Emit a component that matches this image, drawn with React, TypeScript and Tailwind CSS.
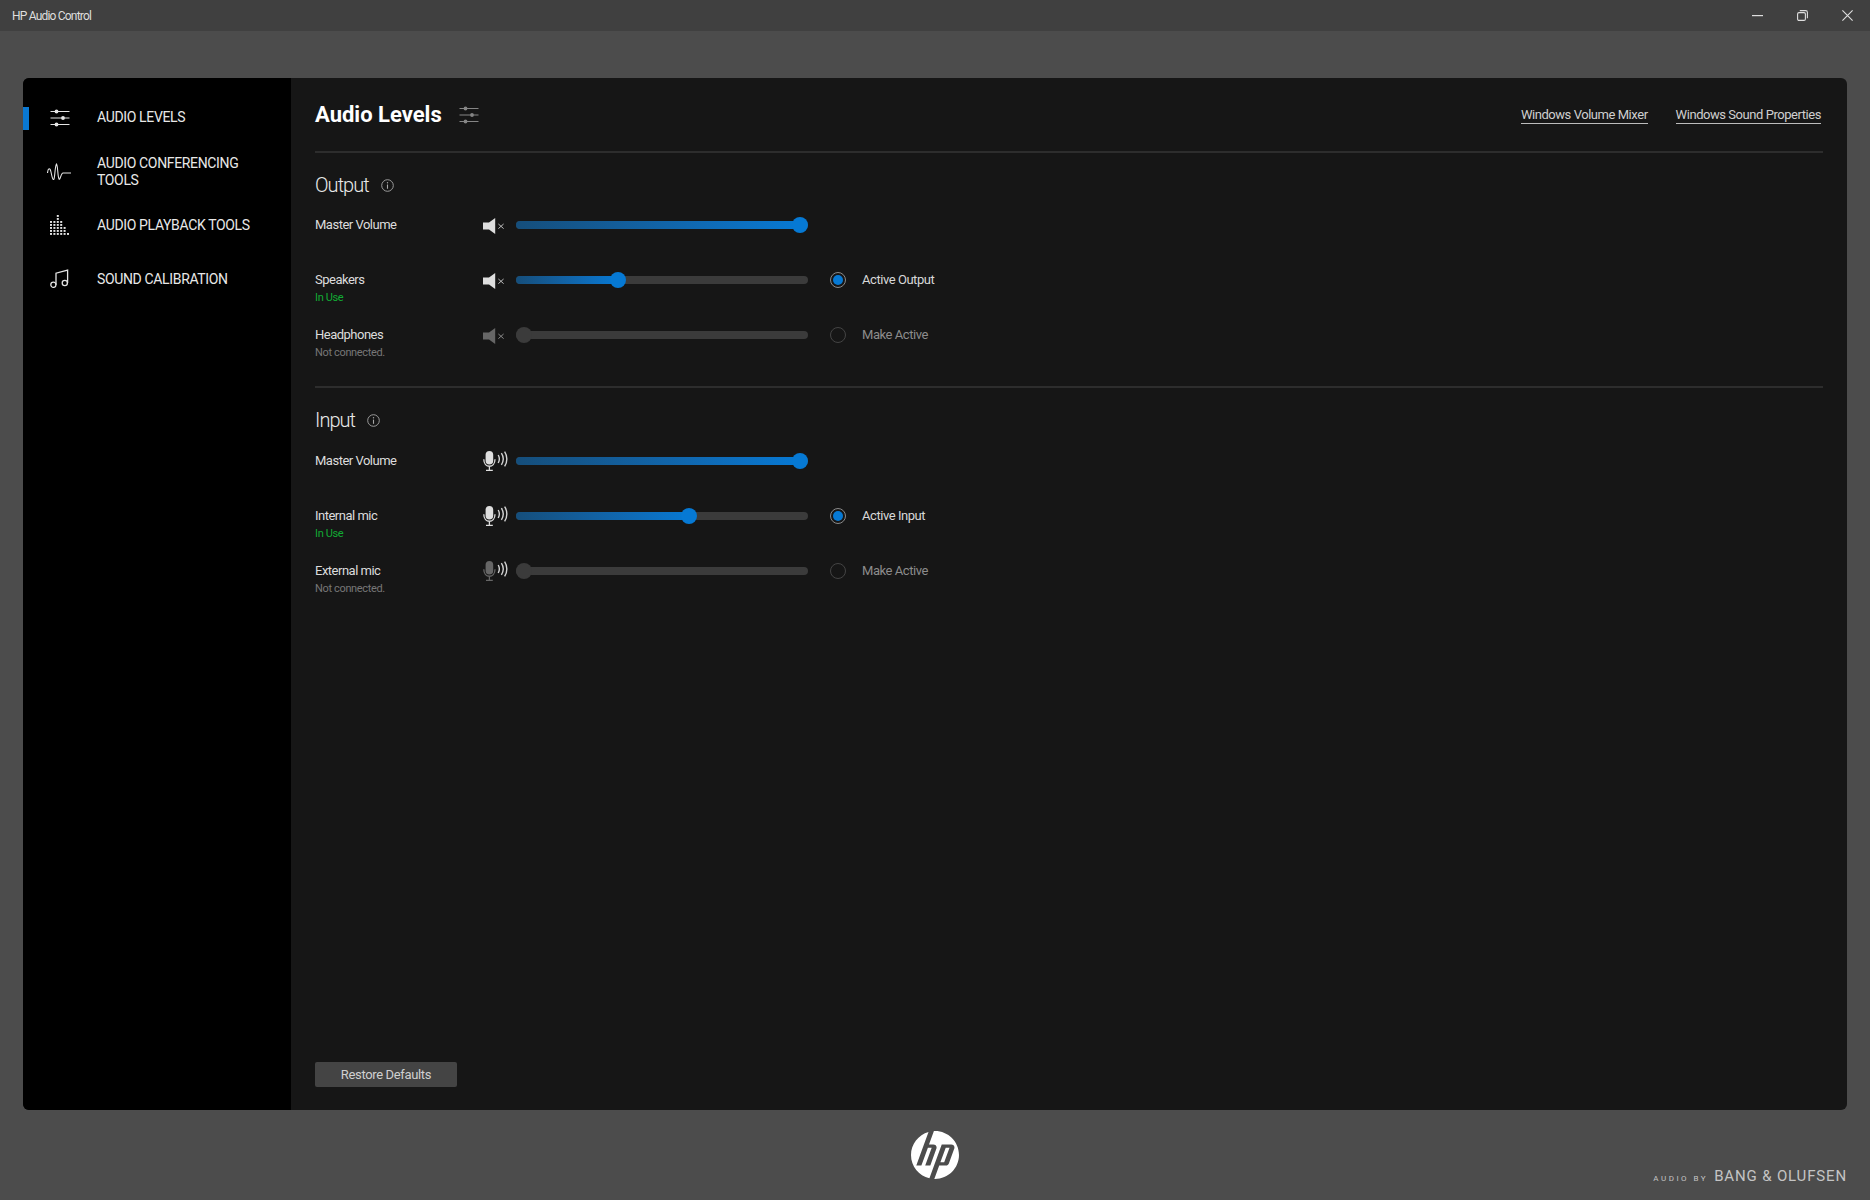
import { ReactNode } from 'react';
import { SiHp } from 'react-icons/si';

function SlidersIcon({ className }: { className?: string }) {
  return (
    <svg viewBox="0 0 20 18" className={className} fill="none" stroke="currentColor" strokeWidth="1.2">
      <path d="M0.5 2.5H19.5M0.5 9H19.5M0.5 15.5H19.5" />
      <circle cx="6.5" cy="2.5" r="1.9" fill="currentColor" stroke="none" />
      <circle cx="13" cy="9" r="1.9" fill="currentColor" stroke="none" />
      <circle cx="6.5" cy="15.5" r="1.9" fill="currentColor" stroke="none" />
    </svg>
  );
}

function WaveIcon({ className }: { className?: string }) {
  return (
    <svg viewBox="0 0 24 18" className={className} fill="none" stroke="currentColor" strokeWidth="1.1">
      <path d="M0.5 10C1 5 3 4 4 9C5 14 6 18 7 16C8 13 8 3 9.5 1C11 3 10.5 13 12 16C13 18 14 10 16 10L24 10" />
    </svg>
  );
}

const BAR_COLUMNS = [5, 5, 7, 5, 3, 1];

function BarsIcon({ className }: { className?: string }) {
  return (
    <svg viewBox="0 0 19 20" className={className} fill="currentColor">
      {BAR_COLUMNS.map((rows, col) =>
        Array.from({ length: rows }).map((_, row) => (
          <rect key={`${col}-${row}`} x={col * 3.4} y={18 - row * 3} width="2" height="1.9" />
        )),
      )}
    </svg>
  );
}

function MusicIcon({ className }: { className?: string }) {
  return (
    <svg viewBox="0 0 19 19" className={className} fill="none" stroke="currentColor" strokeWidth="1.3">
      <circle cx="3.4" cy="15.8" r="2.6" />
      <circle cx="14.8" cy="14" r="2.6" />
      <path d="M6 15.8V4.2L17.6 1.2V14" />
    </svg>
  );
}

function InfoIcon() {
  return (
    <svg viewBox="0 0 13 13" className="h-[13px] w-[13px] text-[#a8a8a8]" fill="none" stroke="currentColor">
      <circle cx="6.5" cy="6.5" r="5.8" strokeWidth="0.9" />
      <path d="M6.5 5.6V9.8" strokeWidth="1.1" />
      <circle cx="6.5" cy="3.8" r="0.7" fill="currentColor" stroke="none" />
    </svg>
  );
}

function SpeakerIcon({ muted }: { muted?: boolean }) {
  return (
    <svg viewBox="0 0 22 16" className={`mt-[2px] h-[16px] w-[22px] ${muted ? 'text-[#666666]' : 'text-[#dedede]'}`}>
      <path d="M0 4.6H6L12.2 0V16L6 11.4H0Z" fill="currentColor" />
      <path d="M15.4 6L20.6 10.6M20.6 6L15.4 10.6" stroke={muted ? '#8a8a8a' : '#bdbdbd'} strokeWidth="1" fill="none" />
    </svg>
  );
}

function MicIcon({ muted }: { muted?: boolean }) {
  return (
    <svg viewBox="0 0 27 20" className={`h-[20px] w-[27px] ${muted ? 'text-[#666666]' : 'text-[#dedede]'}`} fill="none">
      <rect x="2.6" y="0" width="7.6" height="13.6" rx="3.8" fill="currentColor" />
      <path d="M0.8 8.2C0.8 17.6 12 17.6 12 8.2M6.4 15.6V19.2M3 19.4H9.8" stroke="currentColor" strokeWidth="1.3" />
      <path
        d="M15.2 4C16.6 6.4 16.6 9.6 15.2 12M18.4 2.2C20.6 5.6 20.6 10.4 18.4 13.8M21.6 0.6C24.6 5 24.6 11 21.6 15.4"
        stroke="#d4d4d4"
        strokeWidth="1.4"
      />
    </svg>
  );
}

const NAV = [
  { label: 'AUDIO LEVELS', icon: SlidersIcon, size: 'ml-[3px] h-[18px] w-[20px]', active: true },
  { label: 'AUDIO CONFERENCING TOOLS', icon: WaveIcon, size: 'h-[18px] w-[24px]' },
  { label: 'AUDIO PLAYBACK TOOLS', icon: BarsIcon, size: '-mt-[3px] ml-[3px] h-[20px] w-[19px]' },
  { label: 'SOUND CALIBRATION', icon: MusicIcon, size: '-mt-[4px] ml-[3px] h-[19px] w-[19px]' },
];

function Sidebar() {
  return (
    <aside className="w-[268px] shrink-0 bg-black pt-[13px]">
      {NAV.map((item) => (
        <div key={item.label} className="flex h-[54px] items-center">
          <div className={`h-[23px] w-[6px] shrink-0 ${item.active ? 'bg-[#0a78d2]' : ''}`} />
          <div className="ml-[18px] w-[24px] shrink-0 text-[#e4e4e4]">
            <item.icon className={item.size} />
          </div>
          <span className="ml-[26px] w-[170px] text-[14px] leading-[17.5px] tracking-[-0.35px] text-[#e8e8e8]">
            {item.label}
          </span>
        </div>
      ))}
    </aside>
  );
}

function Slider({ value, disabled }: { value: number; disabled?: boolean }) {
  return (
    <div className="relative h-[8px] w-[292px] rounded-full bg-[#3b3b3b]">
      {!disabled && (
        <div
          className="h-full rounded-l-full bg-gradient-to-r from-[#154e7b] to-[#0679d4]"
          style={{ width: value }}
        />
      )}
      <div
        className={`absolute top-[-4px] h-[16px] w-[16px] -translate-x-1/2 rounded-full ${
          disabled ? 'bg-[#3b3b3b]' : 'bg-[#0679d4]'
        }`}
        style={{ left: value }}
      />
    </div>
  );
}

function Radio({ active, label }: { active?: boolean; label: string }) {
  return (
    <div className="ml-[22px] flex items-center">
      <div
        className={`flex h-[16px] w-[16px] items-center justify-center rounded-full border ${
          active ? 'border-[#8a8a8a]' : 'border-[#444444]'
        }`}
      >
        {active && <div className="h-[10px] w-[10px] rounded-full bg-[#0679d4]" />}
      </div>
      <span className={`ml-[16px] text-[13px] tracking-[-0.45px] ${active ? 'text-[#d8d8d8]' : 'text-[#8c8c8c]'}`}>
        {label}
      </span>
    </div>
  );
}

type RowProps = {
  label: string;
  status?: string;
  value: number;
  disabled?: boolean;
  radio?: string;
  active?: boolean;
  icon: ReactNode;
};

function Row({ label, status, value, disabled, radio, active, icon }: RowProps) {
  return (
    <div className="flex h-[55px]">
      <div className="w-[168px] shrink-0">
        <div className="h-[20px] text-[13px] leading-[20px] tracking-[-0.5px] text-[#dcdcdc]">{label}</div>
        {status && (
          <div
            className={`text-[11px] leading-[16px] tracking-[-0.35px] ${
              status === 'In Use' ? 'text-[#12ab34]' : 'text-[#767676]'
            }`}
          >
            {status}
          </div>
        )}
      </div>
      <div className="flex h-[20px] w-[33px] shrink-0 items-center">{icon}</div>
      <div className="flex h-[20px] items-center">
        <Slider value={value} disabled={disabled} />
        {radio && <Radio active={active} label={radio} />}
      </div>
    </div>
  );
}

function Heading({ children }: { children: ReactNode }) {
  return (
    <div className="flex h-[24px] items-center gap-[12px]">
      <span className="text-[20px] font-light leading-[24px] tracking-[-0.95px] text-[#e8e8e8]">{children}</span>
      <InfoIcon />
    </div>
  );
}

export default function App() {
  return (
    <div className="flex h-screen w-full flex-col overflow-hidden bg-[#4c4c4c] font-['Roboto',sans-serif]">
      <header className="flex h-[31px] shrink-0 items-center justify-between bg-[#404040] pl-[12px] text-[#dedede]">
        <span className="text-[12px] tracking-[-0.8px]">HP Audio Control</span>
        <div className="flex items-center">
          <div className="flex w-[45px] justify-center">
            <svg viewBox="0 0 11 2" className="h-[2px] w-[11px]" fill="currentColor">
              <rect width="11" height="1.2" />
            </svg>
          </div>
          <div className="flex w-[45px] justify-center">
            <svg viewBox="0 0 11 11" className="h-[11px] w-[11px]" fill="none" stroke="currentColor" strokeWidth="1.1">
              <rect x="0.6" y="2.6" width="7.8" height="7.8" rx="1.4" />
              <path d="M2.8 0.6H8.6C9.7 0.6 10.4 1.3 10.4 2.4V8.2" />
            </svg>
          </div>
          <div className="flex w-[45px] justify-center">
            <svg viewBox="0 0 11 11" className="h-[11px] w-[11px]" fill="none" stroke="currentColor" strokeWidth="1.1">
              <path d="M0.4 0.4L10.6 10.6M10.6 0.4L0.4 10.6" />
            </svg>
          </div>
        </div>
      </header>

      <div className="px-[23px] pt-[47px]">
        <div className="flex h-[1032px] overflow-hidden rounded-[6px] bg-[#161616]">
          <Sidebar />
          <main className="flex flex-1 flex-col px-[24px] pb-[23px]">
            <div className="flex h-[73px] shrink-0 items-center justify-between">
              <div className="flex items-center gap-[17px]">
                <h1 className="text-[22px] font-bold leading-none text-white">Audio Levels</h1>
                <SlidersIcon className="h-[18px] w-[20px] text-[#858585]" />
              </div>
              <div className="flex gap-[28px] pr-[2px] text-[13px] tracking-[-0.45px] text-[#cfcfcf]">
                <a className="border-b border-[#bcbcbc] leading-[17px]">Windows Volume Mixer</a>
                <a className="border-b border-[#bcbcbc] leading-[17px]">Windows Sound Properties</a>
              </div>
            </div>

            <section className="border-t-2 border-[#2d2d2d] pt-[20px]">
              <Heading>Output</Heading>
              <div className="mt-[18px] pb-[6px]">
                <Row label="Master Volume" value={284} icon={<SpeakerIcon />} />
                <Row
                  label="Speakers"
                  status="In Use"
                  value={102}
                  radio="Active Output"
                  active
                  icon={<SpeakerIcon />}
                />
                <Row
                  label="Headphones"
                  status="Not connected."
                  value={8}
                  disabled
                  radio="Make Active"
                  icon={<SpeakerIcon muted />}
                />
              </div>
            </section>

            <section className="border-t-2 border-[#2d2d2d] pt-[20px]">
              <Heading>Input</Heading>
              <div className="mt-[19px]">
                <Row label="Master Volume" value={284} icon={<MicIcon />} />
                <Row
                  label="Internal mic"
                  status="In Use"
                  value={173}
                  radio="Active Input"
                  active
                  icon={<MicIcon />}
                />
                <Row
                  label="External mic"
                  status="Not connected."
                  value={8}
                  disabled
                  radio="Make Active"
                  icon={<MicIcon muted />}
                />
              </div>
            </section>

            <button className="mt-auto h-[25px] w-[142px] rounded-[2px] bg-[#444444] pt-px text-[13px] tracking-[-0.35px] text-[#d0d0d0]">
              Restore Defaults
            </button>
          </main>
        </div>
      </div>

      <footer className="grid flex-1 grid-cols-3 px-[23px]">
        <div />
        <div className="flex justify-center pt-[21px]">
          <SiHp className="h-[48px] w-[48px] text-white" />
        </div>
        <div className="flex items-end justify-end pb-[15px] text-[#c4c4c4]">
          <span className="mr-[6px] text-[8px] tracking-[2.5px]">AUDIO BY</span>
          <span className="text-[15px] leading-[18px] tracking-[0.85px]">BANG &amp; OLUFSEN</span>
        </div>
      </footer>
    </div>
  );
}
